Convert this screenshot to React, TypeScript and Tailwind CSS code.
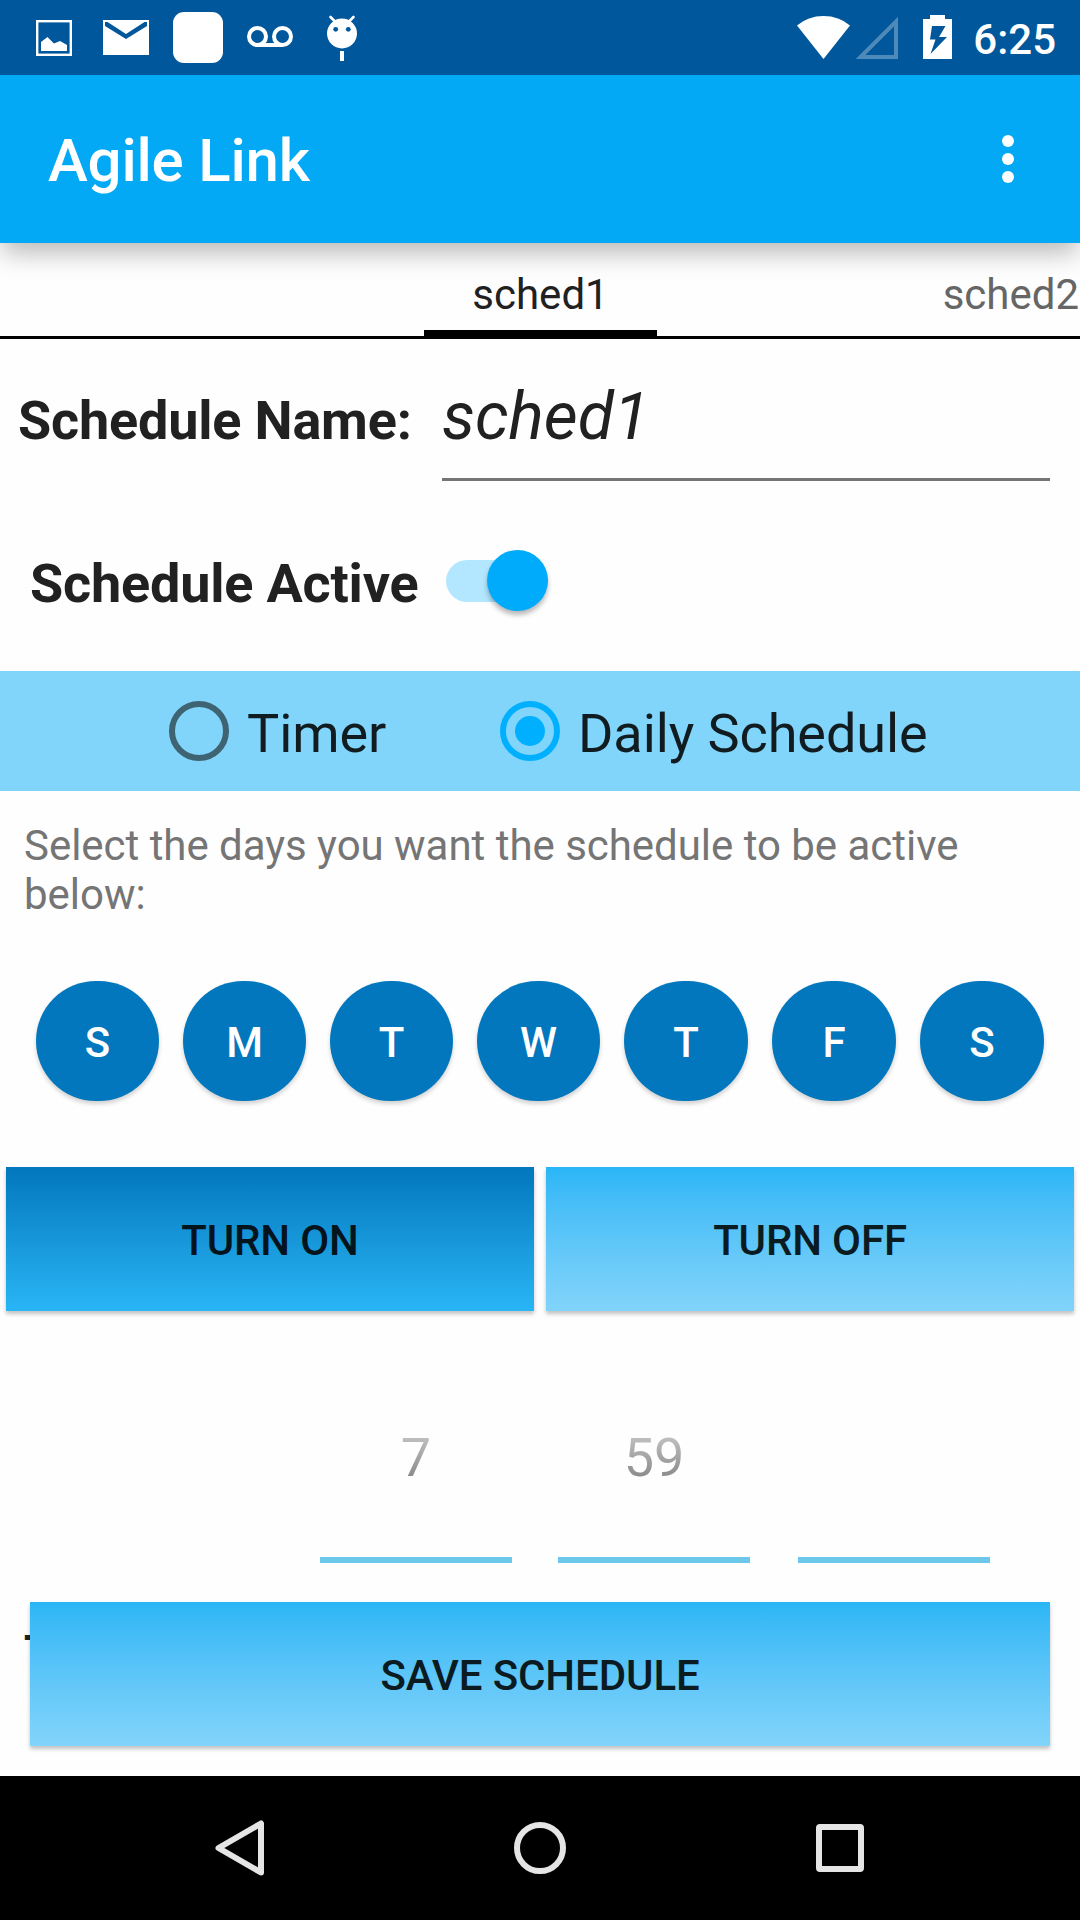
import React from "react";

const days = ["S", "M", "T", "W", "T", "F", "S"];

function StatusBar() {
  return (
    <div className="flex h-[75px] items-start justify-between bg-[#01579b] pr-6">
      <svg width="380" height="75" viewBox="0 0 380 75" fill="white">
        <rect x="37.2" y="21.2" width="33.6" height="33.6" fill="none" stroke="white" strokeWidth="2.4" />
        <path d="M41 51V42L47.5 37L54 43.5L60 41L67 45V51Z" />
        <path fillRule="evenodd" d="M103 20H149V55H103ZM105 22V26L126 39L147 26V22L144.500 22L126 34L107.500 22Z" />
        <rect x="173" y="12" width="50" height="51" rx="11" />
        <g fill="none" stroke="white" strokeWidth="4">
          <circle cx="257.500" cy="36.500" r="8.500" />
          <circle cx="282.500" cy="36.500" r="8.500" />
          <path d="M257.500 45H282.500" />
        </g>
        <circle cx="342" cy="33.500" r="15" />
        <path d="M330.500 17L336 22.500M353.500 17L348 22.500" stroke="white" strokeWidth="2.600" strokeLinecap="round" />
        <circle cx="335.700" cy="29.300" r="2.400" fill="#01579b" />
        <circle cx="348.300" cy="29.300" r="2.400" fill="#01579b" />
        <rect x="340" y="51" width="4" height="10" />
      </svg>
      <div className="flex">
        <svg width="176" height="75" viewBox="797 0 176 75" fill="white">
          <path d="M797 25.500Q808 16 823.500 16Q839 16 850 25.500L823.500 59Z" />
          <path d="M896 21.500V57H860.500Z" fill="none" stroke="#4d89b9" strokeWidth="4" />
          <path fillRule="evenodd" d="M930 15H945V19H952V59H923V19H930ZM932 26L930 39.500H935.500L930.500 54L947 37H939L945.500 26Z" />
        </svg>
        <span className="mt-[15px] text-[42px] leading-[50px] font-medium text-white">6:25</span>
      </div>
    </div>
  );
}

function Toolbar() {
  return (
    <div className="flex h-[168px] items-center justify-between bg-[#03a9f4] pr-[66px] pl-12">
      <h1 className="pt-[4px] text-[60px] leading-[70px] font-medium tracking-[-0.2px] text-white">Agile Link</h1>
      <div className="flex flex-col gap-[6px]">
        <i className="size-3 rounded-full bg-white" />
        <i className="size-3 rounded-full bg-white" />
        <i className="size-3 rounded-full bg-white" />
      </div>
    </div>
  );
}

function Tabs() {
  return (
    <div className="grid h-24 grid-cols-[424px_233px_1fr] border-b-[3px] border-black text-[42px] leading-[50px]">
      <div />
      <div className="border-b-[6px] border-black pt-[27px] text-center text-[#212121]">sched1</div>
      <div className="overflow-hidden pt-[27px] pr-px text-right text-[#666]">sched2</div>
    </div>
  );
}

function Radio({ label, checked }: { label: string; checked?: boolean }) {
  return (
    <div className="flex items-center gap-[18px]">
      {checked ? (
        <span className="flex size-[60px] items-center justify-center rounded-full border-[6px] border-[#00b0ff]">
          <i className="size-[30px] rounded-full bg-[#00b0ff]" />
        </span>
      ) : (
        <span className="size-[60px] rounded-full border-[6px] border-[#3e6372]" />
      )}
      <span className="pt-[6px] text-[54px] leading-[64px] tracking-[-0.08px] text-[#111c21]">{label}</span>
    </div>
  );
}

function Picker({ value }: { value: string }) {
  return (
    <div className="flex h-[252px] w-48 flex-col items-center border-b-[6px] border-[#6cc9eb]">
      <span className="mt-[115px] bg-linear-to-b from-[#bdbdbd] from-20% to-[#878787] to-85% bg-clip-text text-[54px] leading-[64px] text-transparent">
        {value}
      </span>
    </div>
  );
}

export default function App() {
  return (
    <div className="flex h-[1920px] w-[1080px] flex-col overflow-hidden bg-[#fefefe] font-['Roboto',sans-serif]">
      <header className="relative z-10 shadow-[0_12px_24px_-2px_rgba(0,0,0,0.27)]">
        <StatusBar />
        <Toolbar />
      </header>
      <Tabs />

      <div className="flex h-[142px] items-start pr-[30px] pl-[18px]">
        <label className="w-[424px] pt-[50px] text-[54px] leading-[64px] font-bold tracking-[-0.2px] text-[#212121]">Schedule Name:</label>
        <div className="h-full flex-1 border-b-[3px] border-[#757575] pt-[39px] text-[66px] leading-[78px] text-[#212121] italic">
          sched1
        </div>
      </div>

      <div className="flex h-[190px] items-start pl-[30px]">
        <span className="w-[416px] pt-[71px] text-[54px] leading-[64px] font-bold tracking-[-0.2px] text-[#212121]">Schedule Active</span>
        <div className="mt-[69px] flex h-[61px] w-[102px] items-center">
          <div className="flex h-[42px] w-[102px] items-center justify-end rounded-full bg-[#b3e7ff]">
            <i className="size-[61px] shrink-0 rounded-full bg-[#00abfb] shadow-[0_4px_5px_rgba(0,0,0,0.28)]" />
          </div>
        </div>
      </div>

      <div className="flex h-[120px] items-center bg-[#81d4fa] pl-[169px]">
        <div className="w-[331px]">
          <Radio label="Timer" />
        </div>
        <Radio label="Daily Schedule" checked />
      </div>

      <p className="h-[190px] px-6 pt-[30px] text-[42px] leading-[49px] tracking-[-0.03px] text-[#757575]">
        Select the days you want the schedule to be active below:
      </p>

      <div className="grid h-[120px] grid-cols-[repeat(4,123px)_repeat(3,124px)] gap-6 px-9">
        {days.map((d, i) => (
          <button
            key={i}
            className="rounded-full bg-[#0277bd] pt-[3px] text-[42px] font-medium text-white shadow-[0_3px_4px_rgba(0,0,0,0.18)]"
          >
            {d}
          </button>
        ))}
      </div>

      <div className="mt-[66px] flex h-36 gap-3 px-[6px] text-[42px] font-medium tracking-[-0.15px]">
        <button className="flex-1 bg-linear-to-b from-[#0277bd] to-[#29b6f6] pt-[3px] text-[#03141c] shadow-[0_3px_4px_rgba(0,0,0,0.24)]">
          TURN ON
        </button>
        <button className="flex-1 bg-linear-to-b from-[#29b6f6] to-[#81d4fa] pt-[3px] text-[#0b1b22] shadow-[0_3px_4px_rgba(0,0,0,0.24)]">
          TURN OFF
        </button>
      </div>

      <div className="grid grid-cols-[238px_240px_192px] pl-[320px]">
        <Picker value="7" />
        <Picker value="59" />
        <Picker value="" />
      </div>

      <div className="relative h-[213px] pt-[39px]">
        <span className="absolute top-[63px] left-6 text-[42px] leading-[50px] font-bold text-[#212121]">T</span>
        <button className="relative mx-[30px] block h-36 w-[1020px] bg-linear-to-b from-[#29b6f6] to-[#81d4fa] pt-[3px] text-[42px] font-medium tracking-[-0.1px] text-[#0b1b22] shadow-[0_3px_4px_rgba(0,0,0,0.24)]">
          SAVE SCHEDULE
        </button>
      </div>

      <nav className="h-36 bg-black">
        <svg width="1080" height="144" viewBox="0 1776 1080 144" fill="none" stroke="#e5e5e5" strokeWidth="6" strokeLinejoin="round">
          <path d="M261 1823.500V1872.500L218.500 1848Z" />
          <circle cx="540" cy="1848" r="23" />
          <rect x="819" y="1827" width="42" height="42" rx="1" />
        </svg>
      </nav>
    </div>
  );
}
